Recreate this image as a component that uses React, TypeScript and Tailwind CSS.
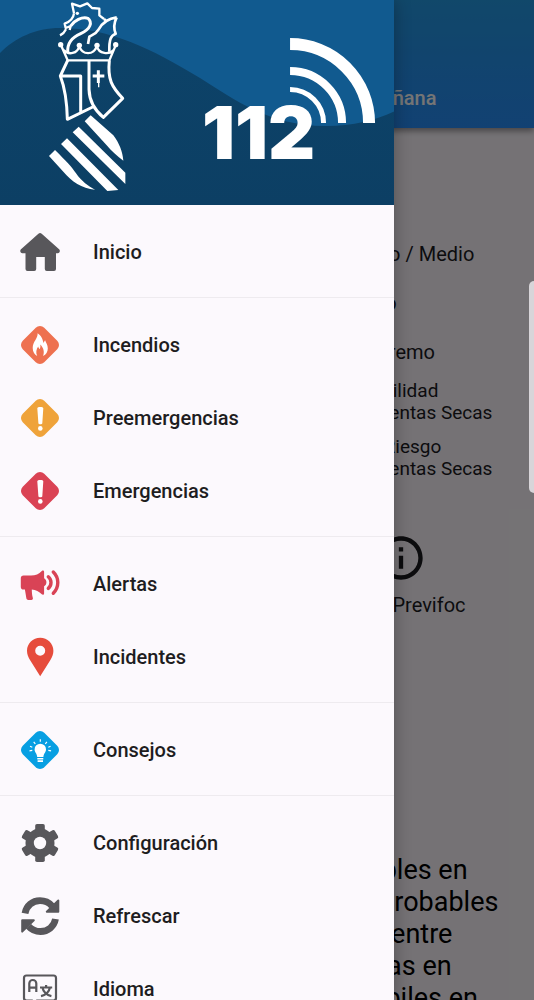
import type { ReactNode } from "react";
import { MdInfoOutline } from "react-icons/md";

const GREY = "#58575b";

function Icon({ children }: { children: ReactNode }) {
  return (
    <svg viewBox="0 0 40 40" className="size-10 shrink-0" aria-hidden="true">
      {children}
    </svg>
  );
}

function Diamond({ color }: { color: string }) {
  return <rect x="4.8" y="4.8" width="30.4" height="30.4" rx="6" fill={color} transform="rotate(45 20 20)" />;
}

function HomeIcon() {
  return (
    <Icon>
      <path
        fill={GREY}
        d="M18.4 1.800a2.500 2.500 0 0 1 3.300 0l17.400 15.500c1.500 1.500.6 4-1.400 4H36V37a2 2 0 0 1-2 2h-7.200a2 2 0 0 1-2-2V25h-8.600V37a2 2 0 0 1-2 2H7.500a2 2 0 0 1-2-2V21.300H2.400c-2 0-2.900-2.500-1.400-4z"
      />
    </Icon>
  );
}

function FireIcon() {
  return (
    <Icon>
      <Diamond color="#ee7150" />
      <path
        fill="#fff"
        d="M17.600 8.300c.5 5.200-4.900 8.300-4.900 14.700 0 4 2 6.700 4.500 8-1.700-3.600-.8-7 1-9.600.3 1.300.8 2.100 1.700 2.700.5-1.600.7-3 .4-4.600 3.300 3.300 4.400 7.600 2.800 11.500 3-1.500 4.700-4.300 4.700-7.600 0-3.500-1.700-5.300-2.700-8.200-.8 1-1.200 1.700-1.500 3-1-4-2.300-7.700-6-9.900z"
      />
    </Icon>
  );
}

function ExclamationIcon({ color }: { color: string }) {
  return (
    <Icon>
      <Diamond color={color} />
      <path fill="#fff" d="M17.300 10.200c0-1.500 6-1.500 6 0L22.300 25.200c-.1 1.500-3.800 1.500-3.900 0z" />
      <circle cx="20.300" cy="30.400" r="2.300" fill="#fff" />
    </Icon>
  );
}

function MegaphoneIcon() {
  return (
    <Icon>
      <path
        fill="#d94356"
        d="M3.500 11.500H11c4.500 0 8-1.700 10.800-4.600.9-.9 2.300-.5 2.300.8v6.600c1.500.8 2.300 2.200 2.300 4s-.8 3.200-2.300 4v7.200c0 1.300-1.400 1.700-2.300.8-2.600-2.600-6-4.600-10-4.700.1 3 .2 5.700 1 8.200.4 1.300-.2 2.200-1.400 2.200H8.300c-1 0-1.700-.5-1.900-1.400L4.900 25.500H3.500c-1.600 0-2.700-1-2.700-2.600v-8.700c0-1.700 1.100-2.700 2.700-2.700z"
      />
      <path
        d="M28.300 12.800c3.600 3 3.600 8.600 0 11.600M33.300 8c6 5.800 6 15.400 0 21.200"
        fill="none"
        stroke="#d94356"
        strokeWidth="3.4"
        strokeLinecap="round"
      />
    </Icon>
  );
}

function PinIcon() {
  return (
    <Icon>
      <path
        fill="#e64c3c"
        fillRule="evenodd"
        d="M20.200.7C12.900.7 7 6.500 7 13.700c0 3.300 1.200 6.200 3 9.300l10.200 16.300L30.400 23c1.800-3.100 3-6 3-9.300C33.400 6.500 27.500.7 20.200.7zm0 8a5 5 0 1 1 0 10 5 5 0 0 1 0-10z"
      />
    </Icon>
  );
}

function BulbIcon() {
  return (
    <Icon>
      <Diamond color="#079fe2" />
      <path
        fill="#fff"
        d="M20.300 13.700a5.700 5.700 0 0 0-5.700 5.700c0 2.800 2.400 3.900 2.600 7.600h6.200c.2-3.700 2.600-4.800 2.600-7.600a5.700 5.700 0 0 0-5.700-5.700zM17.300 28h6v1.500h-6zM17.600 30.300h5.400v1.600h-5.400z"
      />
      <path
        d="M20.300 9.300v2.500M13.700 11.800l1.600 2M26.900 11.800l-1.600 2M10 16.300l2.300.9M30.600 16.300l-2.300.9M9.500 20.800l2.800-.4M31.100 20.800l-2.800-.4"
        stroke="#fff"
        strokeWidth="1.200"
        fill="none"
      />
    </Icon>
  );
}

function GearIcon() {
  return (
    <Icon>
      <g fill={GREY}>
        <circle cx="20" cy="20" r="14.500" />
        <rect x="15.200" y="1" width="9.600" height="38" rx="1.800" />
        <rect x="15.200" y="1" width="9.600" height="38" rx="1.800" transform="rotate(60 20 20)" />
        <rect x="15.200" y="1" width="9.600" height="38" rx="1.800" transform="rotate(120 20 20)" />
      </g>
      <circle cx="20" cy="20" r="6.200" fill="#fcf9fd" />
    </Icon>
  );
}

function RefreshIcon() {
  return (
    <Icon>
      <path d="M5 17.300C6.400 9.800 12.400 4.700 20 4.700c4.800 0 9 1.900 12 5.300" fill="none" stroke={GREY} strokeWidth="6.800" />
      <path d="M35.500 23C34.100 30.500 28 35.500 20.500 35.500c-4.700 0-9-1.900-12-5.300" fill="none" stroke={GREY} strokeWidth="6.800" />
      <path
        d="M38.300 4.500v11.300H26.800zM2.200 35.600V24.200h11.600z"
        fill={GREY}
        stroke={GREY}
        strokeWidth="2"
        strokeLinejoin="round"
      />
    </Icon>
  );
}

function LanguageIcon() {
  return (
    <Icon>
      <g fill="none" stroke={GREY}>
        <path d="M12 31.500H6.500a2.500 2.500 0 0 1-2.500-2.500V9A2.500 2.500 0 0 1 6.500 6.500h27A2.500 2.500 0 0 1 36 9V29a2.500 2.500 0 0 1-2.500 2.500H17l-3 3z" strokeWidth="2.200" />
        <path d="M9.300 23v-8.500a3.500 3.500 0 0 1 7 0V23M9.300 18.600h7" strokeWidth="2.200" />
        <path d="M20 18.500h12.200M26.100 16v2.500M30 18.500c-1 4.500-4.500 7.500-9 8.600M22.400 18.500c1 4.500 4.500 7.500 9 8.600" strokeWidth="2.200" />
      </g>
    </Icon>
  );
}

const sections: { label: string; icon: ReactNode }[][] = [
  [{ label: "Inicio", icon: <HomeIcon /> }],
  [
    { label: "Incendios", icon: <FireIcon /> },
    { label: "Preemergencias", icon: <ExclamationIcon color="#efa33a" /> },
    { label: "Emergencias", icon: <ExclamationIcon color="#da4354" /> },
  ],
  [
    { label: "Alertas", icon: <MegaphoneIcon /> },
    { label: "Incidentes", icon: <PinIcon /> },
  ],
  [{ label: "Consejos", icon: <BulbIcon /> }],
  [
    { label: "Configuración", icon: <GearIcon /> },
    { label: "Refrescar", icon: <RefreshIcon /> },
    { label: "Idioma", icon: <LanguageIcon /> },
  ],
];

function Banner() {
  return (
    <svg viewBox="0 0 394 205" className="block w-full shrink-0" role="img" aria-label="Generalitat 112">
      <defs>
        <linearGradient id="wave" x1="0" y1="0" x2="0" y2="1">
          <stop offset="0" stopColor="#0d4369" />
          <stop offset="1" stopColor="#0c3f64" />
        </linearGradient>
      </defs>
      <rect width="394" height="205" fill="#115a8f" />
      <path d="M0 53C15 38 35 28 60 28c50 0 90 20 140 50 35 22 70 48 125 48 30 0 50-6 70-15v94H0z" fill="url(#wave)" />
      <g transform="scale(.3333)" fill="none" stroke="#fff" strokeWidth="9" strokeLinejoin="round">
        <path d="M222 40 216 11l24 8 22-9 14 14 22 2v20l14 11M222 40c-2 16-10 24-28 31l3 13 15-6-3 12M198 88c-4 9-10 14-18 18" strokeWidth="7" />
        <path d="M212 78c10-16 34-29 52-23 14 12 8 32-22 46-28 13-40 28-39 56" />
        <path d="M350 52c-30 4-44 18-54 36-8 14-18 16-28 22l-4 22M350 52c-8 16-10 32-3 49-14 5-20 16-19 54M312 57l10 8" strokeWidth="8" />
        <path d="m183 136 20 45h125l19-45M191 150c14 16 42 12 47-13 6 30 46 30 52 0 6 26 38 28 52 12" strokeWidth="7" />
        <path d="m203 181-22 47c16 42 20 82 21 130l76-37M328 181c-6 58 8 80 40 114l-58 57c-24-20-42-46-43-84v-86M181 228h61v107" />
        <path d="M295 211v38M278 228h35" />
        <path d="M296 248v14" strokeWidth="4" />
        <g fill="#fff" stroke="none">
          <circle cx="232" cy="40" r="5" />
          <circle cx="182" cy="134" r="8" />
          <circle cx="238" cy="136" r="8" />
          <circle cx="291" cy="136" r="8" />
          <circle cx="347" cy="134" r="8" />
          <path d="m254 364 18-18 68 60c18 24 28 49 30 76-20-14-35-29-50-46zM218 397l18-17 140 138v34zM183 432l18-17 154 155-33 3zM147 468l18-18c35 35 50 50 63 70 17 25 37 38 57 49-40-4-70-24-95-54z" />
        </g>
      </g>
      <g fill="none" stroke="#fff">
        <path d="M290 44a79 79 0 0 1 79 79" strokeWidth="12" />
        <path d="M290 71a52 52 0 0 1 52 52" strokeWidth="8" />
        <path d="M290 89.500A33.500 33.500 0 0 1 323.500 123" strokeWidth="5" />
      </g>
      <text x="202" y="159" fill="#fff" fontFamily="Inter, sans-serif" fontWeight="900" fontSize="73">
        112
      </text>
    </svg>
  );
}

function Drawer() {
  return (
    <aside className="absolute inset-y-0 left-0 z-20 flex w-[73.800%] flex-col overflow-hidden bg-[#fcf9fd] shadow-[0_0_16px_rgba(0,0,0,0.3)]">
      <Banner />
      <nav>
        {sections.map((items) => (
          <ul key={items[0].label} className="border-b border-[#eeebef] pt-[10px] pb-[9px]">
            {items.map(({ label, icon }) => (
              <li key={label}>
                <a href="#" className="flex h-[73px] items-center gap-[33px] px-5 text-[20px] leading-6 font-medium text-[#1e1d21]">
                  {icon}
                  {label}
                </a>
              </li>
            ))}
          </ul>
        ))}
      </nav>
    </aside>
  );
}

function Page() {
  return (
    <div className="flex flex-col text-[20px] leading-[22px] text-[#1c1b1f]">
      <header className="flex h-32 items-end bg-linear-to-b from-[#259de8] via-[#2795ee] via-40% to-[#288ffa] pb-[19px] shadow-[0_3px_6px_rgba(0,0,0,0.4)]">
        <button className="ml-auto w-1/2 text-center font-medium text-white">Mañana</button>
      </header>
      <main className="flex flex-col">
        <ul className="ml-[67.600%] flex flex-col gap-[27px] pt-[115px]">
          <li>Bajo / Medio</li>
          <li>Alto</li>
          <li>Extremo</li>
        </ul>
        <ul className="ml-[64.600%] flex flex-col gap-3 pt-[17px] text-[19px]">
          <li>
            Posibilidad
            <br />
            Tormentas Secas
          </li>
          <li>
            Alto Riesgo
            <br />
            Tormentas Secas
          </li>
        </ul>
        <button className="ml-auto flex w-1/2 flex-col items-center gap-[10px] pt-[52px]">
          <MdInfoOutline className="size-[52px]" />
          Datos Previfoc
        </button>
        <p className="flex flex-col pt-[238px] pl-[68%] text-[27px] leading-8 whitespace-nowrap text-black">
          <span className="pl-3">ibles en</span>
          <span className="pl-4">probables</span>
          <span className="pl-7">entre</span>
          <span className="pl-6">as en</span>
          <span className="pl-2">ébiles en</span>
        </p>
      </main>
    </div>
  );
}

export default function App() {
  return (
    <div className="relative h-screen overflow-hidden bg-[#fef9ff] font-[Roboto,sans-serif]">
      <Page />
      <div className="absolute inset-0 z-10 bg-black/54" />
      <Drawer />
      <div className="absolute top-[281px] right-0 z-30 h-[212px] w-[5px] rounded-l-[5px] bg-[#d8d5d9]" />
    </div>
  );
}
